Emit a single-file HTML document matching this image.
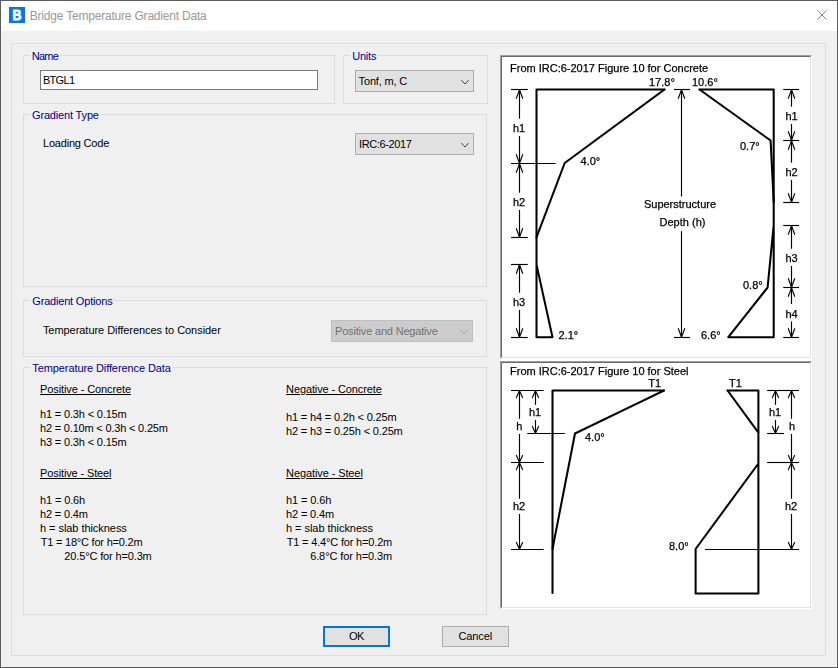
<!DOCTYPE html>
<html>
<head>
<meta charset="utf-8">
<title>Bridge Temperature Gradient Data</title>
<style>
html,body{margin:0;padding:0;}
body{width:838px;height:668px;overflow:hidden;background:#f0f0f0;font-family:"Liberation Sans",Arial,sans-serif;font-size:11px;color:#000;position:relative;}
#win{position:absolute;left:0;top:0;width:836px;height:666px;border:1px solid #5c5c5c;background:#f0f0f0;}
#title{position:absolute;left:1px;top:1px;width:836px;height:30px;background:#fff;}
#ttext{position:absolute;font-size:12px;line-height:14px;color:#999;white-space:nowrap;}
#icon{position:absolute;left:9px;top:7px;width:16px;height:16px;background:#0b74e4;}
.abs{position:absolute;}
.gb{position:absolute;border:1px solid #dcdcdc;box-sizing:border-box;}
.gbl{position:absolute;background:#f0f0f0;color:#00008b;white-space:nowrap;line-height:13px;padding:0 2px;margin-left:-2px;}
.t{position:absolute;white-space:nowrap;line-height:13px;}
.u{text-decoration:underline;}
.combo{position:absolute;box-sizing:border-box;border:1px solid #adadad;background:#e1e1e1;}
.btn{position:absolute;box-sizing:border-box;border:1px solid #adadad;background:#e1e1e1;}
.pic{position:absolute;box-sizing:border-box;background:#fff;border-top:1px solid #a0a0a0;border-left:1px solid #a0a0a0;border-right:1px solid #fff;border-bottom:1px solid #fff;}
.pic i{position:absolute;left:0;top:0;right:0;bottom:0;border-top:1px solid #696969;border-left:1px solid #696969;border-right:1px solid #e3e3e3;border-bottom:1px solid #e3e3e3;}
svg text{font-family:"Liberation Sans",Arial,sans-serif;font-size:11px;fill:#000;}
</style>
</head>
<body>
<div id="win"></div>
<div id="title"></div>
<div id="icon"><svg width="16" height="16" viewBox="0 0 16 16"><text x="0" y="13.35" transform="translate(3.5,0) scale(0.84,1)" style="font-size:14.8px;font-weight:bold;fill:#fff;stroke:#fff;stroke-width:0.9px">B</text></svg></div>
<svg class="abs" style="left:817px;top:10px" width="10" height="10" viewBox="0 0 10 10"><path d="M0.5 0.5 L9.5 9.5 M9.5 0.5 L0.5 9.5" stroke="#808080" stroke-width="1" fill="none"/></svg>

<!-- outer panel -->
<div class="gb" style="left:11px;top:43px;width:815px;height:613px;"></div>

<!-- group boxes -->
<div class="gb" style="left:23px;top:55px;width:312px;height:49px;"></div>
<div class="gb" style="left:343px;top:55px;width:145px;height:49px;"></div>
<div class="gb" style="left:23px;top:114px;width:464px;height:173px;"></div>
<div class="gb" style="left:23px;top:300px;width:464px;height:57px;"></div>
<div class="gb" style="left:23px;top:367px;width:464px;height:248px;"></div>

<!-- name input -->
<div class="abs" style="left:40px;top:70px;width:278px;height:20px;box-sizing:border-box;border:1px solid #7a7a7a;background:#fff;"></div>

<!-- combos -->
<div class="combo" style="left:355px;top:70px;width:119px;height:22px;">
<svg class="abs" style="left:105px;top:8px" width="9" height="6" viewBox="0 0 9 6"><path d="M0.3 1.1 L4 5 L7.7 1.1" stroke="#3a3a3a" stroke-width="0.95" fill="none"/></svg></div>
<div class="combo" style="left:355px;top:133px;width:119px;height:22px;">
<svg class="abs" style="left:105px;top:8px" width="9" height="6" viewBox="0 0 9 6"><path d="M0.3 1.1 L4 5 L7.7 1.1" stroke="#3a3a3a" stroke-width="0.95" fill="none"/></svg></div>
<div class="combo" style="left:331px;top:320px;width:142px;height:22px;background:#cccccc;border-color:#bfbfbf;">
<svg class="abs" style="left:128px;top:8px" width="9" height="6" viewBox="0 0 9 6"><path d="M0.3 1.1 L4 5 L7.7 1.1" stroke="#a6a6a6" stroke-width="0.95" fill="none"/></svg></div>

<!-- buttons -->
<div class="btn" style="left:323px;top:626px;width:67px;height:21px;border:2px solid #0078d7;"></div>
<div class="btn" style="left:442px;top:626px;width:67px;height:21px;"></div>

<div id="ttext" style="left:29.78px;top:9px;letter-spacing:-0.200px;">Bridge Temperature Gradient Data</div>
<div class="gbl" style="left:31.69px;top:50px;letter-spacing:-0.735px;">Name</div>
<div class="gbl" style="left:352.15px;top:50px;letter-spacing:-0.183px;">Units</div>
<div class="gbl" style="left:31.99px;top:109px;letter-spacing:-0.160px;">Gradient Type</div>
<div class="gbl" style="left:32.29px;top:295px;letter-spacing:-0.186px;">Gradient Options</div>
<div class="gbl" style="left:32.31px;top:362px;letter-spacing:-0.096px;">Temperature Difference Data</div>
<div class="t" style="left:42.91px;top:74px;letter-spacing:-0.682px;">BTGL1</div>
<div class="t" style="left:42.97px;top:137px;letter-spacing:-0.197px;">Loading Code</div>
<div class="t" style="left:42.91px;top:324px;letter-spacing:-0.048px;">Temperature Differences to Consider</div>
<div class="t" style="left:358.61px;top:75px;letter-spacing:-0.164px;">Tonf, m, C</div>
<div class="t" style="left:358.95px;top:138px;letter-spacing:-0.361px;">IRC:6-2017</div>
<div class="t" style="left:335.01px;top:325px;letter-spacing:-0.181px;color:#727272;">Positive and Negative</div>
<div class="t u" style="left:40.11px;top:383px;letter-spacing:-0.113px;">Positive - Concrete</div>
<div class="t" style="left:40.03px;top:408px;letter-spacing:-0.162px;">h1 = 0.3h &lt; 0.15m</div>
<div class="t" style="left:40.03px;top:422px;letter-spacing:-0.187px;">h2 = 0.10m &lt; 0.3h &lt; 0.25m</div>
<div class="t" style="left:40.03px;top:436px;letter-spacing:-0.162px;">h3 = 0.3h &lt; 0.15m</div>
<div class="t u" style="left:40.11px;top:467px;letter-spacing:-0.133px;">Positive - Steel</div>
<div class="t" style="left:40.03px;top:494px;letter-spacing:-0.124px;">h1 = 0.6h</div>
<div class="t" style="left:40.03px;top:508px;letter-spacing:-0.165px;">h2 = 0.4m</div>
<div class="t" style="left:40.03px;top:522px;letter-spacing:-0.054px;">h = slab thickness</div>
<div class="t" style="left:40.71px;top:536px;letter-spacing:-0.212px;">T1 = 18°C for h=0.2m</div>
<div class="t" style="left:64.30px;top:550px;letter-spacing:-0.139px;">20.5°C for h=0.3m</div>
<div class="t u" style="left:286.09px;top:383px;letter-spacing:-0.117px;">Negative - Concrete</div>
<div class="t" style="left:286.03px;top:411px;letter-spacing:-0.168px;">h1 = h4 = 0.2h &lt; 0.25m</div>
<div class="t" style="left:286.03px;top:425px;letter-spacing:-0.156px;">h2 = h3 = 0.25h &lt; 0.25m</div>
<div class="t u" style="left:286.09px;top:467px;letter-spacing:-0.101px;">Negative - Steel</div>
<div class="t" style="left:286.03px;top:494px;letter-spacing:-0.111px;">h1 = 0.6h</div>
<div class="t" style="left:286.03px;top:508px;letter-spacing:-0.140px;">h2 = 0.4m</div>
<div class="t" style="left:286.03px;top:522px;letter-spacing:-0.048px;">h = slab thickness</div>
<div class="t" style="left:286.71px;top:536px;letter-spacing:-0.171px;">T1 = 4.4°C for h=0.2m</div>
<div class="t" style="left:310.17px;top:550px;letter-spacing:-0.107px;">6.8°C for h=0.3m</div>
<div class="t" style="left:349.02px;top:630px;letter-spacing:-0.524px;">OK</div>
<div class="t" style="left:458.47px;top:630px;letter-spacing:-0.098px;">Cancel</div>

<!-- pictures -->
<div class="abs" style="left:500px;top:55px;width:312px;height:553px;background:#fff;"></div>
<div class="pic" style="left:500px;top:55px;width:312px;height:304px;"><i></i></div>
<div class="pic" style="left:500px;top:361px;width:312px;height:248px;"><i></i></div>

<svg class="abs" style="left:0;top:0;will-change:transform" width="838" height="668" viewBox="0 0 838 668">
<g id="pic1" fill="none" stroke="#000">
<text x="510" y="72" stroke-width="0.25">From IRC:6-2017 Figure 10 for Concrete</text>
<path d="M664.5 89.5 L536.5 89.5 L536.5 337.2 L552.5 337.2 L536.5 264.6" stroke-width="2.05" stroke-linejoin="round" stroke-linecap="round"/>
<path d="M664.5 89.5 L564.7 163 L536.5 237.4" stroke-width="2.05" stroke-linejoin="round" stroke-linecap="round"/>
<path d="M511 89.5 L527.8 89.5" stroke-width="1.15"/>
<path d="M511 163.5 L555.6 163.5" stroke-width="1.15"/>
<path d="M511 237.5 L527.8 237.5" stroke-width="1.15"/>
<path d="M511 264.5 L527.8 264.5" stroke-width="1.15"/>
<path d="M511 337.5 L527.8 337.5" stroke-width="1.15"/>
<path d="M516.2 98.7 L519.5 89.8 L522.8 98.7" stroke-width="1.1" stroke-linejoin="bevel"/>
<path d="M516.2 154.3 L519.5 163.2 L522.8 154.3" stroke-width="1.1" stroke-linejoin="bevel"/>
<path d="M519.5 89.5 L519.5 118.7" stroke-width="1.15"/>
<path d="M519.5 136.0 L519.5 163.5" stroke-width="1.15"/>
<text x="513" y="131.5" stroke-width="0.25">h1</text>
<path d="M516.2 172.7 L519.5 163.8 L522.8 172.7" stroke-width="1.1" stroke-linejoin="bevel"/>
<path d="M516.2 228.3 L519.5 237.2 L522.8 228.3" stroke-width="1.1" stroke-linejoin="bevel"/>
<path d="M519.5 163.5 L519.5 192.7" stroke-width="1.15"/>
<path d="M519.5 210.0 L519.5 237.5" stroke-width="1.15"/>
<text x="513" y="205.5" stroke-width="0.25">h2</text>
<path d="M516.2 273.7 L519.5 264.8 L522.8 273.7" stroke-width="1.1" stroke-linejoin="bevel"/>
<path d="M516.2 328.3 L519.5 337.2 L522.8 328.3" stroke-width="1.1" stroke-linejoin="bevel"/>
<path d="M519.5 264.5 L519.5 292.7" stroke-width="1.15"/>
<path d="M519.5 310.0 L519.5 337.5" stroke-width="1.15"/>
<text x="513" y="305.5" stroke-width="0.25">h3</text>
<text x="580.5" y="164.5" stroke-width="0.25">4.0°</text>
<text x="558.5" y="339" stroke-width="0.25">2.1°</text>
<text x="649" y="85.5" stroke-width="0.25">17.8°</text>
<text x="692" y="85.5" stroke-width="0.25">10.6°</text>
<path d="M674 89.5 L690 89.5" stroke-width="1.15"/>
<path d="M674 337.5 L690 337.5" stroke-width="1.15"/>
<path d="M678.2 98.7 L681.5 89.8 L684.8 98.7" stroke-width="1.1" stroke-linejoin="bevel"/>
<path d="M678.2 328.3 L681.5 337.2 L684.8 328.3" stroke-width="1.1" stroke-linejoin="bevel"/>
<path d="M681.5 89.5 L681.5 196.5" stroke-width="1.15"/>
<path d="M681.5 231.2 L681.5 337.5" stroke-width="1.15"/>
<text x="680" y="207.5" text-anchor="middle" stroke-width="0.25">Superstructure</text>
<text x="682.5" y="225.5" text-anchor="middle" stroke-width="0.25">Depth (h)</text>
<path d="M699.5 89.5 L773.7 89.5 L773.7 337.2 L728.3 337.2 L767.6 287.5 L773.7 225" stroke-width="2.05" stroke-linejoin="round" stroke-linecap="round"/>
<path d="M699.5 89.5 L770.6 140.5 L773.7 202" stroke-width="2.05" stroke-linejoin="round" stroke-linecap="round"/>
<path d="M783.2 89.5 L799 89.5" stroke-width="1.15"/>
<path d="M783.2 140.5 L799 140.5" stroke-width="1.15"/>
<path d="M783.2 202.5 L799 202.5" stroke-width="1.15"/>
<path d="M783.2 225.5 L799 225.5" stroke-width="1.15"/>
<path d="M783.2 287.5 L799 287.5" stroke-width="1.15"/>
<path d="M783.2 337.5 L799 337.5" stroke-width="1.15"/>
<path d="M788.2 98.7 L791.5 89.8 L794.8 98.7" stroke-width="1.1" stroke-linejoin="bevel"/>
<path d="M788.2 131.3 L791.5 140.2 L794.8 131.3" stroke-width="1.1" stroke-linejoin="bevel"/>
<path d="M791.5 89.5 L791.5 106.7" stroke-width="1.15"/>
<path d="M791.5 124.0 L791.5 140.5" stroke-width="1.15"/>
<text x="785.5" y="119.5" stroke-width="0.25">h1</text>
<path d="M788.2 149.7 L791.5 140.8 L794.8 149.7" stroke-width="1.1" stroke-linejoin="bevel"/>
<path d="M788.2 193.3 L791.5 202.2 L794.8 193.3" stroke-width="1.1" stroke-linejoin="bevel"/>
<path d="M791.5 140.5 L791.5 162.7" stroke-width="1.15"/>
<path d="M791.5 180.0 L791.5 202.5" stroke-width="1.15"/>
<text x="785.5" y="175.5" stroke-width="0.25">h2</text>
<path d="M788.2 234.7 L791.5 225.8 L794.8 234.7" stroke-width="1.1" stroke-linejoin="bevel"/>
<path d="M788.2 278.3 L791.5 287.2 L794.8 278.3" stroke-width="1.1" stroke-linejoin="bevel"/>
<path d="M791.5 225.5 L791.5 248.7" stroke-width="1.15"/>
<path d="M791.5 266.0 L791.5 287.5" stroke-width="1.15"/>
<text x="785.5" y="261.5" stroke-width="0.25">h3</text>
<path d="M788.2 296.7 L791.5 287.8 L794.8 296.7" stroke-width="1.1" stroke-linejoin="bevel"/>
<path d="M788.2 328.3 L791.5 337.2 L794.8 328.3" stroke-width="1.1" stroke-linejoin="bevel"/>
<path d="M791.5 287.5 L791.5 304" stroke-width="1.15"/>
<path d="M791.5 321.5 L791.5 337.5" stroke-width="1.15"/>
<text x="785.5" y="317.5" stroke-width="0.25">h4</text>
<text x="740" y="149.5" stroke-width="0.25">0.7°</text>
<text x="743" y="289" stroke-width="0.25">0.8°</text>
<text x="701" y="338.5" stroke-width="0.25">6.6°</text>
</g>
<g id="pic2" fill="none" stroke="#000">
<text x="510" y="374.5" stroke-width="0.25">From IRC:6-2017 Figure 10 for Steel</text>
<path d="M664 390.5 L552.5 390.5 L552.5 593" stroke-width="2.05" stroke-linejoin="round" stroke-linecap="round"/>
<path d="M664 390.5 L575 433.5 L552.5 549" stroke-width="2.05" stroke-linejoin="round" stroke-linecap="round"/>
<path d="M511 390.5 L543.7 390.5" stroke-width="1.15"/>
<path d="M527.2 433.5 L564.8 433.5" stroke-width="1.15"/>
<path d="M511 462.5 L543.7 462.5" stroke-width="1.15"/>
<path d="M511 549.5 L543.7 549.5" stroke-width="1.15"/>
<path d="M532.2 398.1 L535.5 390.8 L538.8 398.1" stroke-width="1.1" stroke-linejoin="bevel"/>
<path d="M532.2 425.9 L535.5 433.2 L538.8 425.9" stroke-width="1.1" stroke-linejoin="bevel"/>
<path d="M535.5 390.5 L535.5 404.8" stroke-width="1.15"/>
<path d="M535.5 420.0 L535.5 433.5" stroke-width="1.15"/>
<text x="529" y="415.5" stroke-width="0.25">h1</text>
<path d="M516.2 398.1 L519.5 390.8 L522.8 398.1" stroke-width="1.1" stroke-linejoin="bevel"/>
<path d="M516.2 454.9 L519.5 462.2 L522.8 454.9" stroke-width="1.1" stroke-linejoin="bevel"/>
<path d="M519.5 390.5 L519.5 418.8" stroke-width="1.15"/>
<path d="M519.5 434.0 L519.5 462.5" stroke-width="1.15"/>
<text x="516.3" y="429.5" stroke-width="0.25">h</text>
<path d="M516.2 470.1 L519.5 462.8 L522.8 470.1" stroke-width="1.1" stroke-linejoin="bevel"/>
<path d="M516.2 541.9 L519.5 549.2 L522.8 541.9" stroke-width="1.1" stroke-linejoin="bevel"/>
<path d="M519.5 462.5 L519.5 498.8" stroke-width="1.15"/>
<path d="M519.5 514.0 L519.5 549.5" stroke-width="1.15"/>
<text x="513" y="509.5" stroke-width="0.25">h2</text>
<text x="585" y="440.5" stroke-width="0.25">4.0°</text>
<text x="648.2" y="386.5" stroke-width="0.25">T1</text>
<text x="729" y="386.5" stroke-width="0.25">T1</text>
<path d="M727.6 390.5 L758.4 390.5 L758.4 593.4 L695.6 593.4 L695.6 549 L758.4 463.5" stroke-width="2.05" stroke-linejoin="round" stroke-linecap="round"/>
<path d="M727.6 390.5 L758.4 432.7" stroke-width="2.05" stroke-linejoin="round" stroke-linecap="round"/>
<path d="M767.1 390.5 L799 390.5" stroke-width="1.15"/>
<path d="M767.1 433.5 L784 433.5" stroke-width="1.15"/>
<path d="M767.1 462.5 L799 462.5" stroke-width="1.15"/>
<path d="M705 549.5 L799 549.5" stroke-width="1.15"/>
<path d="M772.2 398.1 L775.5 390.8 L778.8 398.1" stroke-width="1.1" stroke-linejoin="bevel"/>
<path d="M772.2 425.9 L775.5 433.2 L778.8 425.9" stroke-width="1.1" stroke-linejoin="bevel"/>
<path d="M775.5 390.5 L775.5 404.8" stroke-width="1.15"/>
<path d="M775.5 420.0 L775.5 433.5" stroke-width="1.15"/>
<text x="769" y="415.5" stroke-width="0.25">h1</text>
<path d="M788.2 398.1 L791.5 390.8 L794.8 398.1" stroke-width="1.1" stroke-linejoin="bevel"/>
<path d="M788.2 454.9 L791.5 462.2 L794.8 454.9" stroke-width="1.1" stroke-linejoin="bevel"/>
<path d="M791.5 390.5 L791.5 418.8" stroke-width="1.15"/>
<path d="M791.5 434.0 L791.5 462.5" stroke-width="1.15"/>
<text x="789" y="429.5" stroke-width="0.25">h</text>
<path d="M788.2 470.1 L791.5 462.8 L794.8 470.1" stroke-width="1.1" stroke-linejoin="bevel"/>
<path d="M788.2 541.9 L791.5 549.2 L794.8 541.9" stroke-width="1.1" stroke-linejoin="bevel"/>
<path d="M791.5 462.5 L791.5 498.8" stroke-width="1.15"/>
<path d="M791.5 514.0 L791.5 549.5" stroke-width="1.15"/>
<text x="785" y="509.5" stroke-width="0.25">h2</text>
<text x="669" y="549.5" stroke-width="0.25">8.0°</text>
</g>
</svg>
</body>
</html>
